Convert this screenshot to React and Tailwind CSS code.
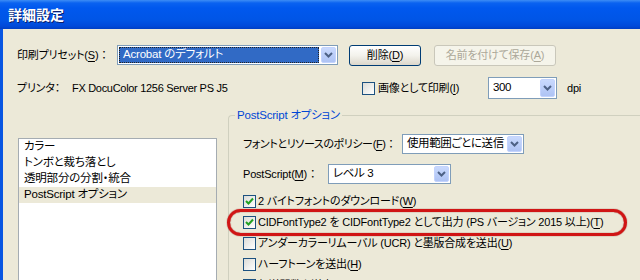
import React from 'react';

const font = "font-['Liberation_Sans','Noto_Sans_CJK_JP',sans-serif] [font-feature-settings:'palt'] text-[11px] tracking-[-0.2px] leading-none whitespace-nowrap";

const Key = ({ k }) => (
  <span>
    (<u className="underline-offset-[2px]">{k}</u>)
  </span>
);

const Chevron = () => (
  <svg width="9" height="6" viewBox="0 0 9 6">
    <path d="M1 1 L4.5 4.5 L8 1" fill="none" stroke="#4D6185" strokeWidth="2" />
  </svg>
);

const ComboArrow = () => (
  <div className="m-px flex w-[15px] items-center justify-center rounded-[2px] border border-[#C3D3FD] bg-linear-to-b from-[#C9D9FD] to-[#AEC3F4]">
    <Chevron />
  </div>
);

const Combo = ({ value, className }) => (
  <div className={`flex border border-[#7F9DB9] bg-white ${className}`}>
    <div className="flex flex-1 items-center overflow-hidden pl-[4px] text-[11.5px] tracking-[-0.4px]">{value}</div>
    <ComboArrow />
  </div>
);

const Check = ({ checked }) => (
  <div className="flex h-[13px] w-[13px] shrink-0 items-center justify-center border border-[#1C5180] bg-linear-to-br from-[#DCDCD7] to-white">
    {checked && (
      <svg width="9" height="9" viewBox="0 0 9 9">
        <path d="M1 4 L3.5 6.5 L8 1.5" fill="none" stroke="#21A121" strokeWidth="2" />
      </svg>
    )}
  </div>
);

const CheckRow = ({ checked, children, ring }) => (
  <div className="relative flex h-[21px] items-center gap-[2px]">
    {ring && (
      <div className="pointer-events-none absolute top-[-3px] left-[-16px] h-[27px] w-[400px] rounded-full border-[3px] border-[#D01515] shadow-[0_0_1px_#7a0000,inset_0_0_1px_#7a0000]" />
    )}
    <Check checked={checked} />
    <span>{children}</span>
  </div>
);

export default function App() {
  return (
    <div className={`${font} relative flex h-[280px] w-[640px] flex-col overflow-hidden bg-[#ECE9D8] text-black`}>
      {/* title bar */}
      <div className="flex h-[29px] shrink-0 items-center bg-[linear-gradient(to_bottom,#3D8DF5_0px,#0A62F0_3px,#0058EE_8px,#0055E6_20px,#004ADA_26px,#003FC4_29px)] pl-[8px]">
        <span className="text-[14px] font-bold tracking-normal text-white [text-shadow:1px_1px_0_#0A1E6A]">詳細設定</span>
      </div>

      <div className="flex flex-1">
        <div className="w-[3px] shrink-0 bg-[#0856E2]" />

        <div className="flex flex-1 flex-col">
          {/* preset row */}
          <div className="mt-[16px] flex h-[20px] items-center pl-[14px]">
            <div className="w-[100px]">
              印刷プリセット<Key k="S" /> ：
            </div>
            <div className="flex h-[20px] w-[221px] border border-[#7F9DB9] bg-white">
              <div className="m-[1px] flex flex-1 items-center border border-dotted border-[#222] bg-[#316AC5] pl-[3px] text-[11.5px] text-white">
                Acrobat のデフォルト
              </div>
              <ComboArrow />
            </div>
            <button className="ml-[11px] flex h-[21px] w-[72px] items-center justify-center rounded-[3px] border border-[#003C74] bg-linear-to-b from-white via-[#F3F2EC] to-[#DCD7CB]">
              削除<Key k="D" />
            </button>
            <button className="ml-[13px] flex h-[21px] w-[122px] items-center justify-center rounded-[3px] border border-[#C9C7BA] bg-[#F5F4EA] text-[#ACA899]">
              名前を付けて保存<Key k="A" />
            </button>
          </div>

          {/* printer row */}
          <div className="mt-[12px] flex h-[22px] items-center pl-[14px]">
            <div className="w-[55px]">プリンタ：</div>
            <div className="w-[290px] tracking-[-0.3px]">FX DocuColor 1256 Server PS J5</div>
            <Check />
            <div className="ml-[3px] w-[110px]">
              画像として印刷<Key k="I" />
            </div>
            <Combo value="300" className="h-[22px] w-[69px]" />
            <span className="ml-[10px]">dpi</span>
          </div>

          {/* lower section */}
          <div className="mt-[16px] flex items-start">
            <div className="ml-[15px] mt-[23px] h-[160px] w-[199px] shrink-0 border border-[#A5ACB2] bg-white text-[11.5px]">
              <div className="flex h-[16px] items-center pl-[5px]">カラー</div>
              <div className="flex h-[16px] items-center pl-[5px]">トンボと裁ち落とし</div>
              <div className="flex h-[16px] items-center pl-[5px]">透明部分の分割・統合</div>
              <div className="flex h-[16px] items-center bg-[#ECE9D8] pl-[5px]">PostScript オプション</div>
            </div>

            <div className="ml-[11px] h-[200px] flex-1 rounded-tl-[4px] border-t border-l border-[#D0D0BF]">
              <div className="-mt-[8px] ml-[6px] flex h-[16px] w-fit items-center bg-[#ECE9D8] px-[2px] text-[11.5px] text-[#0046D5]">
                PostScript オプション
              </div>

              <div className="pl-[14px]">
                <div className="mt-[10px] flex h-[20px] items-center">
                  <div className="w-[159px] tracking-[-0.4px]">
                    フォントとリソースのポリシー<Key k="F" /> ：
                  </div>
                  <Combo value="使用範囲ごとに送信" className="h-[20px] w-[122px]" />
                </div>
                <div className="mt-[10px] flex h-[20px] items-center">
                  <div className="w-[85px]">
                    PostScript<Key k="M" /> ：
                  </div>
                  <Combo value="レベル 3" className="h-[20px] w-[123px]" />
                </div>

                <div className="mt-[7px] flex flex-col">
                  <CheckRow checked>
                    2 バイトフォントのダウンロード<Key k="W" />
                  </CheckRow>
                  <CheckRow checked ring>
                    CIDFontType2 を CIDFontType2 として出力 (PS バージョン 2015 以上)<Key k="T" />
                  </CheckRow>
                  <CheckRow>
                    アンダーカラーリムーバル (UCR) と墨版合成を送出<Key k="U" />
                  </CheckRow>
                  <CheckRow>
                    ハーフトーンを送出<Key k="H" />
                  </CheckRow>
                  <CheckRow>
                    転送関数を送出<Key k="N" />
                  </CheckRow>
                </div>
              </div>
            </div>
          </div>
        </div>
      </div>
    </div>
  );
}
